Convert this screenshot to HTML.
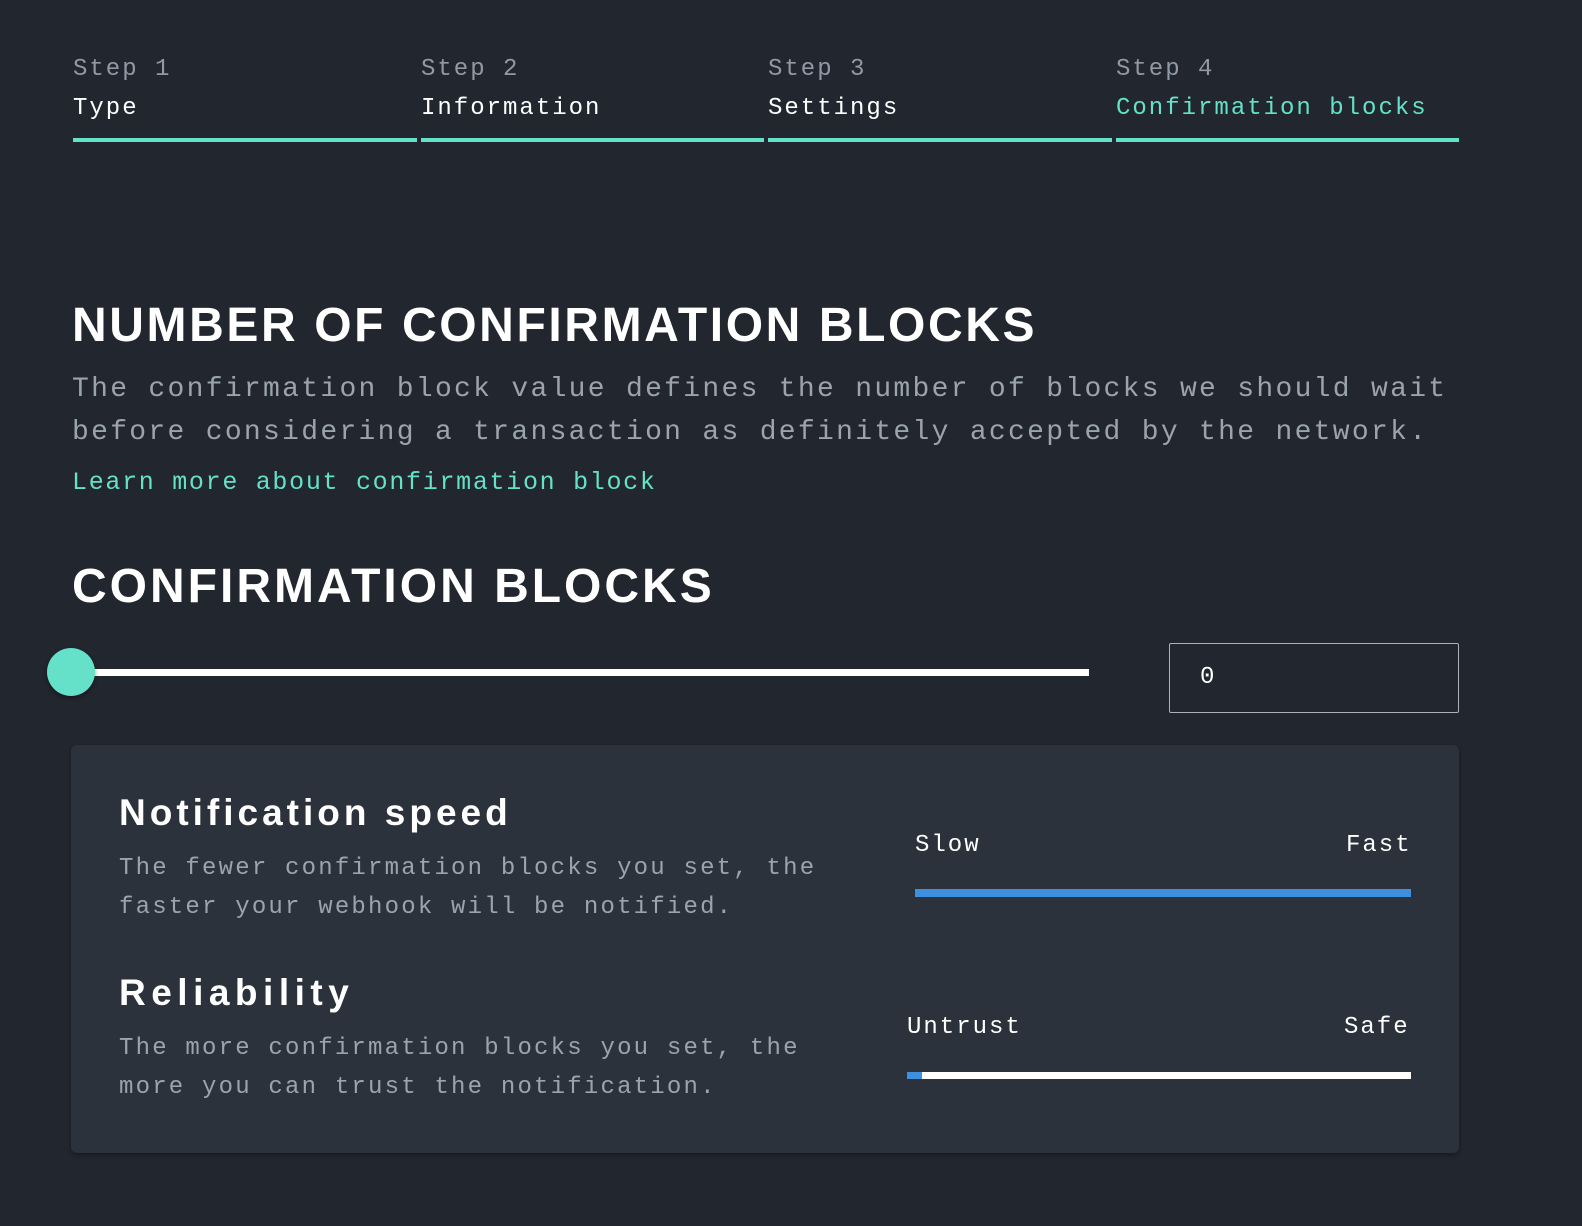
<!DOCTYPE html>
<html><head><style>
body{margin:0;width:1582px;height:1226px;background:#22262e;position:relative;overflow:hidden;font-family:"Liberation Mono",monospace;}
.a{position:absolute;white-space:nowrap;}
.step{position:absolute;top:50px;height:92px;border-bottom:4px solid #64e1c8;box-sizing:border-box;}
.step .s{font-size:24px;letter-spacing:2px;color:#8f9aa6;position:absolute;top:6px;left:0;}
.step .t{font-size:24px;letter-spacing:2px;color:#fff;position:absolute;top:45px;left:0;}
h1,h2,h3{margin:0;font-family:"Liberation Sans",sans-serif;font-weight:bold;color:#fff;position:absolute;white-space:nowrap;}
.m{color:#9aa4ae;letter-spacing:2.2px;}
</style></head><body>
<div class="step" style="left:73px;width:344px"><div class="s">Step 1</div><div class="t">Type</div></div>
<div class="step" style="left:421px;width:343px"><div class="s">Step 2</div><div class="t">Information</div></div>
<div class="step" style="left:768px;width:344px"><div class="s">Step 3</div><div class="t">Settings</div></div>
<div class="step" style="left:1116px;width:343px"><div class="s">Step 4</div><div class="t" style="color:#64e1c8">Confirmation blocks</div></div>

<h1 style="left:72px;top:298px;font-size:48px;letter-spacing:2.6px">NUMBER OF CONFIRMATION BLOCKS</h1>
<div class="a m" style="left:72px;top:368px;font-size:28px;line-height:43px;letter-spacing:2.3px">The confirmation block value defines the number of blocks we should wait<br>before considering a transaction as definitely accepted by the network.</div>
<div class="a" style="left:72px;top:468px;font-size:25px;letter-spacing:1.7px;color:#64e1c8">Learn more about confirmation block</div>
<h1 style="left:72px;top:559px;font-size:48px;letter-spacing:3px">CONFIRMATION BLOCKS</h1>

<div class="a" style="left:72px;top:669px;width:1017px;height:7px;background:#fff"></div>
<div class="a" style="left:47px;top:648px;width:48px;height:48px;border-radius:50%;background:#64e1c8;box-shadow:0 2px 4px rgba(0,0,0,.4)"></div>
<div class="a" style="left:1169px;top:643px;width:290px;height:70px;border:1.5px solid #a9b3bd;box-sizing:border-box;border-radius:2px"></div>
<div class="a" style="left:1200px;top:664px;font-size:24px;color:#fff">0</div>

<div class="a" style="left:71px;top:745px;width:1388px;height:408px;background:#2b323c;border-radius:6px;box-shadow:0 2px 4px rgba(0,0,0,.3)"></div>
<h3 style="left:119px;top:792px;font-size:37px;letter-spacing:4px">Notification speed</h3>
<div class="a m" style="left:119px;top:849px;font-size:24px;line-height:39px">The fewer confirmation blocks you set, the<br>faster your webhook will be notified.</div>
<div class="a" style="left:915px;top:832px;font-size:24px;letter-spacing:2px;color:#fff">Slow</div>
<div class="a" style="left:1346px;top:832px;font-size:24px;letter-spacing:2px;color:#fff">Fast</div>
<div class="a" style="left:915px;top:889px;width:496px;height:8px;background:#3d8fe0"></div>

<h3 style="left:119px;top:972px;font-size:37px;letter-spacing:5.5px">Reliability</h3>
<div class="a m" style="left:119px;top:1029px;font-size:24px;line-height:39px">The more confirmation blocks you set, the<br>more you can trust the notification.</div>
<div class="a" style="left:907px;top:1014px;font-size:24px;letter-spacing:2px;color:#fff">Untrust</div>
<div class="a" style="left:1344px;top:1014px;font-size:24px;letter-spacing:2px;color:#fff">Safe</div>
<div class="a" style="left:907px;top:1072px;width:504px;height:7px;background:#fff"></div>
<div class="a" style="left:907px;top:1072px;width:15px;height:7px;background:#3d8fe0"></div>
</body></html>
